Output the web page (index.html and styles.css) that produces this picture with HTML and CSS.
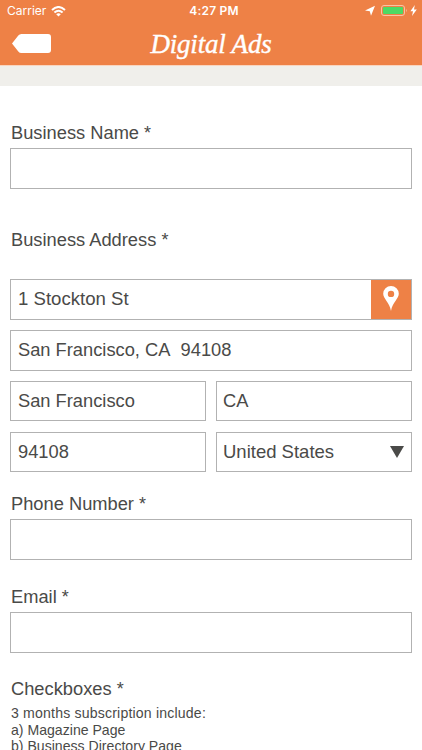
FILE: index.html
```html
<!DOCTYPE html>
<html lang="en">
<head>
<meta charset="utf-8">
<title>Digital Ads</title>
<link rel="stylesheet" href="styles.css">
</head>
<body>
<header class="header">
  <div class="status">
    <div class="carrier">
      <span>Carrier</span>
      <svg class="wifi" width="15" height="11" viewBox="0 0 15 11" fill="none" stroke="#fff" stroke-width="2"><path d="M1 3.9Q7.5-1.9 14 3.9M3.4 6.5Q7.5 2.9 11.6 6.5"/><path d="M5.2 8.2Q7.5 6.3 9.8 8.2L7.5 10.6Z" fill="#fff" stroke="none"/></svg>
    </div>
    <span class="time">4:27 PM</span>
    <div class="power">
      <svg width="56" height="14" viewBox="365 4 56 14"><path d="M365 10.6L375 5.700L371 15.800L369.800 11.300Z" fill="#fff"/><rect x="381.5" y="5.5" width="23" height="10" rx="2.5" fill="none" stroke="#f8c4a4"/><rect x="383" y="7" width="20" height="7" rx="1" fill="#4cd964"/><path d="M406 8.8q1.5 1.7 0 3.5z" fill="#f8c4a4"/><path d="M414.800 5L410.400 11.200H413L412 16L416.800 9.600H414Z" fill="#fff"/></svg>
    </div>
  </div>
  <div class="nav">
    <svg class="back" width="39" height="19" viewBox="0 0 39 19"><path d="M0 9.5L6.3 1.6Q7.5 0 9.4 0H36Q39 0 39 3V16Q39 19 36 19H9.4Q7.5 19 6.3 17.4Z" fill="#fff"/></svg>
    <h1 class="title">Digital Ads</h1>
  </div>
</header>
<div class="band"></div>
<main class="form">
  <label class="label">Business Name <span class="star">*</span></label>
  <div class="field"></div>
  <label class="label address-label">Business Address <span class="star">*</span></label>
  <div class="address">
    <div class="field wide located">1 Stockton St
      <span class="locate"><svg width="16" height="25" viewBox="0 0 16 25"><path fill="#fff" fill-rule="evenodd" d="M8 0a7.8 7.8 0 0 1 7.8 7.8C15.800 13 9.500 16 8 25C6.500 16 .2 13 .2 7.800A7.800 7.800 0 0 1 8 0ZM8 4.700a3.200 3.200 0 1 0 0 6.400a3.200 3.200 0 0 0 0-6.400Z"/></svg></span>
    </div>
    <div class="field wide city">San Francisco, CA&nbsp; 94108</div>
    <div class="field short">San Francisco</div>
    <div class="field short">CA</div>
    <div class="field short">94108</div>
    <div class="field short select">United States<svg width="14" height="12" viewBox="0 0 14 12"><path d="M0 0H14L7 12Z" fill="#4a4a48"/></svg></div>
  </div>
  <label class="label phone-label">Phone Number <span class="star">*</span></label>
  <div class="field"></div>
  <label class="label email-label">Email <span class="star">*</span></label>
  <div class="field"></div>
  <label class="label check-label">Checkboxes <span class="star">*</span></label>
  <p class="description"><span class="include">3 months subscription include:</span><br>a) Magazine Page<br>b) Business Directory Page</p>
</main>
</body>
</html>
```
FILE: styles.css
```css
* { box-sizing: border-box; }
html, body { height: 750px; overflow: hidden; }
body {
  margin: 0;
  background: #fff;
  color: #4a4a48;
  font-family: "Liberation Sans", Arial, sans-serif;
}
svg { display: block; flex: none; }
.header { height: 65px; background: #ee8146; color: #fff; }
.status {
  display: grid;
  grid-template-columns: 1fr auto 1fr;
  align-items: center;
  height: 22px;
  padding: 0 1px 0 7px;
  font: 12px/22px Inter, sans-serif;
}
.carrier { display: flex; align-items: center; gap: 5px; padding-bottom: 1px; }
.carrier span { width: 39px; }
.time { padding-bottom: 1px; font-weight: 600; letter-spacing: .2px; }
.power { display: flex; justify-content: flex-end; padding-bottom: 1px; }
.nav {
  display: grid;
  grid-template-columns: 1fr auto 1fr;
  align-items: center;
  height: 43px;
  padding: 0 12px;
}
.title {
  margin: 0;
  font: italic 400 27px/40px "Liberation Serif", serif;
  letter-spacing: -.2px;
  -webkit-text-stroke: .4px #fff;
}
.band { height: 21px; background: #f0efeb; border-top: 1px solid #f9d5bf; }
.form { padding: 35px 10px 0; }
.label { display: block; height: 27px; padding-left: 1px; font-size: 18.3px; line-height: 23px; }
.star { font-size: 18px; line-height: 1; }
.field {
  height: 41px;
  border: 1px solid #b2b2b2;
  padding: 0 7px;
  font-size: 18.3px;
  line-height: 38px;
}
.address-label { margin-top: 39px; }
.address { display: grid; grid-template-columns: 1fr 1fr; gap: 10px; margin-top: 24px; }
.wide { grid-column: 1 / 3; }
.short { height: 40px; margin-bottom: 1px; padding: 0 7px 0 6px; }
.short:nth-child(odd) { padding-left: 7px; }
.located { display: flex; justify-content: space-between; padding-right: 0; font-size: 18.6px; }
.locate { display: flex; width: 40px; justify-content: center; padding-top: 6px; background: #ee8146; }
.select { display: flex; align-items: center; justify-content: space-between; font-size: 18.5px; }
.phone-label { margin-top: 19px; }
.email-label { margin-top: 25px; }
.check-label { margin-top: 24px; }
.description { margin: 1px 0 0 1px; font-size: 14.1px; line-height: 16.5px; }
.include { letter-spacing: .18px; }
```
